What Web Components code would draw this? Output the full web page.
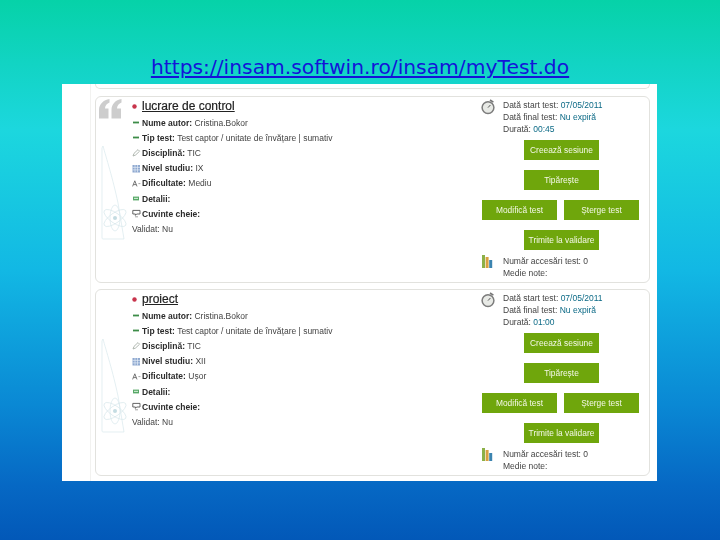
<!DOCTYPE html>
<html lang="ro">
<head>
<meta charset="utf-8">
<title>my test</title>
<style>
  html, body { margin: 0; padding: 0; }
  body { width: 720px; height: 540px; overflow: hidden; }
</style>
</head>
<body>
<test-slide url="https://insam.softwin.ro/insam/myTest.do">
  <test-card title="lucrare de control" quote level="IX" difficulty="Mediu" start="07/05/2011" duration="00:45"></test-card>
  <test-card title="proiect" level="XII" difficulty="Ușor" start="07/05/2011" duration="01:00"></test-card>
</test-slide>

<script>
const slideTemplate = document.createElement('template');
slideTemplate.innerHTML = `
  <style>
  :host {
    display: flex;
    flex-direction: column;
    align-items: center;
    width: 720px;
    height: 540px;
    background: linear-gradient(180deg, #06d2a8 0%, #12d4c4 12%, #1cd7de 24%, #12b8e4 50%, #0a88d4 75%, #0668c4 90%, #0258b8 100%);
    font-family: "DejaVu Sans", sans-serif;
  }
  header {
    height: 84px;
    display: flex;
    align-items: flex-end;
    flex: none;
  }
  a {
    color: #1414d8;
    font-size: 20.3px;
    line-height: 25px;
    padding-bottom: 4px;
    text-decoration: underline;
  }
  .panel {
    width: 595px;
    height: 397px;
    flex: none;
    box-sizing: border-box;
    margin-right: 1px;
    background: #fff;
    padding: 0 7px 0 28px;
  }
  .inner {
    height: 100%;
    box-sizing: border-box;
    border-left: 1px solid #f2f2f0;
    padding-left: 4px;
    display: flex;
    flex-direction: column;
    gap: 6px;
  }
  .stub {
    height: 5px;
    box-sizing: border-box;
    margin-bottom: 1px;
    border: 1px solid #e2e2de;
    border-top: 0;
    border-radius: 0 0 5px 5px;
  }
  </style>
  <header><a id="link"></a></header>
  <div class="panel">
    <div class="inner">
      <div class="stub"></div>
      <slot></slot>
    </div>
  </div>
`;

class TestSlide extends HTMLElement {
  constructor () {
    super();
    this.attachShadow({mode: 'open'});
    this.shadowRoot.appendChild(slideTemplate.content.cloneNode(true));
    const link = this.shadowRoot.getElementById('link');
    link.textContent = this.getAttribute('url');
    link.href = this.getAttribute('url');
  }
}

const icons = {
  bullet: '<svg width="8" height="9" viewBox="0 0 8 9"><circle cx="2.5" cy="4.5" r="2.2" fill="#c8344c"/></svg>',
  dash: '<svg width="9" height="9" viewBox="0 0 9 9"><rect x="1" y="3.6" width="6" height="1.8" fill="#3c8c48"/></svg>',
  box: '<svg width="9" height="9" viewBox="0 0 9 9"><rect x="1" y="2.6" width="6" height="3.8" fill="#58a868"/><rect x="2" y="3.8" width="4" height="1.2" fill="#c8e8cc"/></svg>',
  pencil: '<svg width="9" height="9" viewBox="0 0 9 9" fill="none" stroke="#a8b0a8" stroke-width=".9"><path d="M1 8 L2 5.4 L6 1.6 L7.6 3.2 L3.6 7 Z"/></svg>',
  grid: '<svg width="9" height="9" viewBox="0 0 9 9"><rect x=".5" y="1" width="7.5" height="7.5" fill="#8ea8d0"/><path d="M.5 3.4H8M.5 5.9H8M3 1V8.5M5.5 1V8.5" stroke="#e4ecf6" stroke-width=".7"/></svg>',
  letter: '<svg width="9" height="9" viewBox="0 0 9 9" fill="none" stroke="#666" stroke-width=".9"><path d="M.6 7.4 L2.8 1.8 L5 7.4 M1.4 5.6H4.2"/><path d="M6.4 4.6H8.4" stroke="#999"/></svg>',
  speech: '<svg width="9" height="9" viewBox="0 0 9 9" fill="none" stroke="#555" stroke-width=".9"><path d="M.8 1.4H8V5H4.6L3.4 6.4V5H.8Z"/><path d="M3 7.8H6" stroke="#999"/></svg>'
};

const cardTemplate = document.createElement('template');
cardTemplate.innerHTML = `
  <style>
  :host {
    display: block;
    position: relative;
    height: 187px;
    box-sizing: border-box;
    border: 1px solid #e2e2de;
    border-radius: 6px;
    background: #fff;
    color: #444;
    font-family: "Liberation Sans", sans-serif;
    font-size: 8.5px;
  }
  .body {
    display: flex;
    justify-content: space-between;
    height: 100%;
    padding: 0 10px 0 36px;
    box-sizing: border-box;
    filter: blur(.3px);
  }
  .facts {
    display: flex;
    flex-direction: column;
  }
  h2 {
    margin: 0;
    display: flex;
    align-items: center;
    height: 18px;
    font-size: 12px;
    font-weight: normal;
    color: #222;
    text-decoration: underline;
    -webkit-text-stroke: .2px #222;
  }
  h2 span { margin-left: 2px; }
  .watermark {
    position: absolute;
    left: 5px;
    top: 48px;
    width: 28px;
    height: 96px;
  }
  .mark {
    position: absolute;
    left: 3px;
    top: 2px;
  }
  .side {
    width: 157px;
    display: flex;
    flex-direction: column;
    padding-top: 2px;
  }
  .times {
    display: flex;
    gap: 8px;
    margin-left: -1px;
  }
  .lines { line-height: 12px; }
  .lines b { font-weight: normal; color: #0c6a86; }
  .actions {
    display: flex;
    flex-direction: column;
    align-items: center;
    gap: 10px;
    margin-top: 5px;
  }
  .actions > action-button { margin-left: 2px; }
  .pair {
    display: flex;
    gap: 7px;
  }
  .stats {
    display: flex;
    gap: 10px;
    margin-top: 5px;
  }
  </style>
  <svg class="watermark" viewBox="0 0 28 96" fill="none" stroke="#d8e8ec" stroke-width=".7">
    <path d="M2 1 C5 12 12 34 17 58 L23 94 H2 C1 94 1 93 1 92 V3 Z"/>
    <ellipse cx="14" cy="73" rx="13" ry="5" transform="rotate(35 14 73)"/>
    <ellipse cx="14" cy="73" rx="13" ry="5" transform="rotate(-35 14 73)"/>
    <ellipse cx="14" cy="73" rx="13" ry="5" transform="rotate(90 14 73)"/>
    <circle cx="14" cy="73" r="2" fill="#c4dce2" stroke="none"/>
  </svg>
  <svg class="mark" id="mark" width="24" height="20" viewBox="0 0 24 20" fill="#cdcdcd">
    <path d="M10.5 0 C4.5 1 0 5 0 11 V19.5 H9.5 V9.5 H6 C6 6.5 8 4.5 10.5 3.5 Z"/>
    <path d="M22.5 0 C16.5 1 12.5 5 12.5 11 V19.5 H22 V9.5 H18 C18 6.5 20 4.5 22.5 3.5 Z"/>
  </svg>
  <div class="body">
    <div class="facts">
      <h2>${icons.bullet}<span id="title"></span></h2>
      <fact-row label="Nume autor:" value="Cristina.Bokor">${icons.dash}</fact-row>
      <fact-row label="Tip test:" value="Test captor / unitate de învățare | sumativ">${icons.dash}</fact-row>
      <fact-row label="Disciplină:" value="TIC">${icons.pencil}</fact-row>
      <fact-row id="level" label="Nivel studiu:">${icons.grid}</fact-row>
      <fact-row id="difficulty" label="Dificultate:">${icons.letter}</fact-row>
      <fact-row label="Detalii:">${icons.box}</fact-row>
      <fact-row label="Cuvinte cheie:">${icons.speech}</fact-row>
      <fact-row plain value="Validat: Nu"></fact-row>
    </div>
    <div class="side">
      <div class="times">
        <svg width="14" height="16" viewBox="0 0 14 16">
          <path d="M9 1 L12.4 3.2" stroke="#777" stroke-width="1.6"/>
          <circle cx="7" cy="8.6" r="5.9" fill="#e8eae6" stroke="#7c7c7c" stroke-width="1.5"/>
          <path d="M7 8.6 L9.4 6" stroke="#555" stroke-width="1"/>
        </svg>
        <div class="lines">
          <div>Dată start test: <b id="start"></b></div>
          <div>Dată final test: <b>Nu expiră</b></div>
          <div>Durată: <b id="duration"></b></div>
        </div>
      </div>
      <div class="actions">
        <action-button>Creează sesiune</action-button>
        <action-button>Tipărește</action-button>
        <div class="pair">
          <action-button>Modifică test</action-button>
          <action-button>Șterge test</action-button>
        </div>
        <action-button>Trimite la validare</action-button>
      </div>
      <div class="stats">
        <svg width="11" height="13" viewBox="0 0 11 13">
          <rect x="0" y="0" width="3" height="13" fill="#8cb048"/>
          <rect x="3.6" y="2" width="3" height="11" fill="#d8a040"/>
          <rect x="7.2" y="5" width="3" height="8" fill="#3c84b0"/>
        </svg>
        <div class="lines">
          <div>Număr accesări test: 0</div>
          <div>Medie note:</div>
        </div>
      </div>
    </div>
  </div>
`;

class TestCard extends HTMLElement {
  constructor () {
    super();
    this.attachShadow({mode: 'open'});
    this.shadowRoot.appendChild(cardTemplate.content.cloneNode(true));
    const root = this.shadowRoot;
    root.getElementById('title').textContent = this.getAttribute('title');
    root.getElementById('start').textContent = this.getAttribute('start');
    root.getElementById('duration').textContent = this.getAttribute('duration');
    root.getElementById('level').setAttribute('value', this.getAttribute('level'));
    root.getElementById('difficulty').setAttribute('value', this.getAttribute('difficulty'));
    if (!this.hasAttribute('quote')) root.getElementById('mark').remove();
    this.removeAttribute('title');
  }
}

const rowTemplate = document.createElement('template');
rowTemplate.innerHTML = `
  <style>
  :host {
    display: flex;
    align-items: center;
    gap: 1px;
    height: 15.2px;
    white-space: nowrap;
  }
  .icon { display: flex; width: 9px; }
  b { font-weight: bold; color: #2c2c2c; }
  </style>
  <span class="icon"><slot></slot></span>
  <span><b id="label"></b> <span id="value"></span></span>
`;

class FactRow extends HTMLElement {
  static get observedAttributes () {
    return ['value'];
  }
  constructor () {
    super();
    this.attachShadow({mode: 'open'});
    this.shadowRoot.appendChild(rowTemplate.content.cloneNode(true));
    this.shadowRoot.getElementById('label').textContent = this.getAttribute('label') || '';
    if (this.hasAttribute('plain')) this.shadowRoot.querySelector('.icon').remove();
  }
  attributeChangedCallback (name, oldValue, newValue) {
    if (oldValue === newValue) return;
    this.shadowRoot.getElementById('value').textContent = newValue;
  }
}

const buttonTemplate = document.createElement('template');
buttonTemplate.innerHTML = `
  <style>
  :host {
    display: flex;
    align-items: center;
    justify-content: center;
    width: 75px;
    height: 20px;
    background: #6fa60c;
    color: #f4f8e8;
    font-size: 8.4px;
    white-space: nowrap;
  }
  </style>
  <slot></slot>
`;

class ActionButton extends HTMLElement {
  constructor () {
    super();
    this.attachShadow({mode: 'open'});
    this.shadowRoot.appendChild(buttonTemplate.content.cloneNode(true));
  }
}

customElements.define('fact-row', FactRow);
customElements.define('action-button', ActionButton);
customElements.define('test-card', TestCard);
customElements.define('test-slide', TestSlide);
</script>
</body>
</html>
